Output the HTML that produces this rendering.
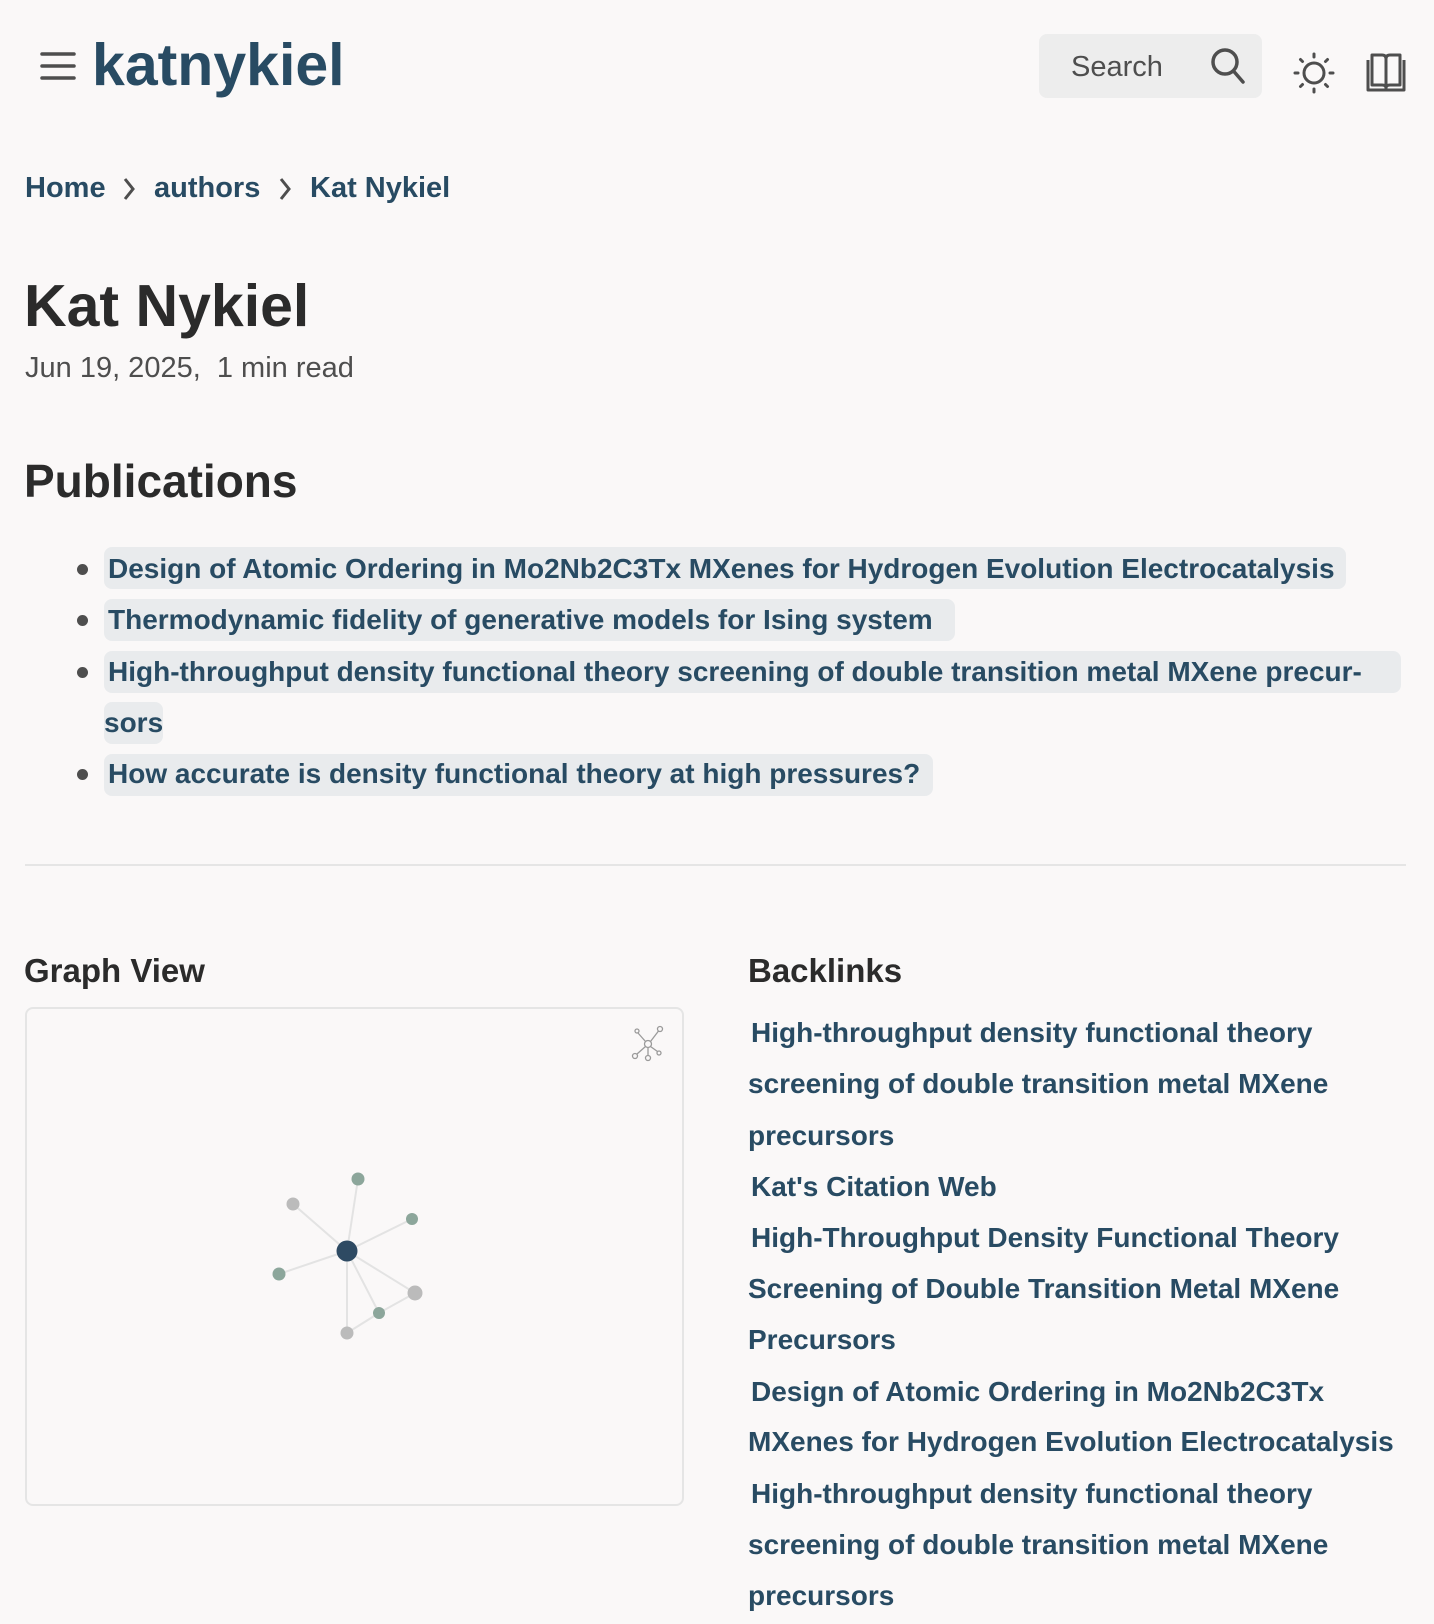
<!DOCTYPE html>
<html><head><meta charset="utf-8"><style>
*{margin:0;padding:0;box-sizing:border-box}
body{width:1434px;height:1624px;background:#faf8f8;font-family:"Liberation Sans",sans-serif;color:#2b2b2b;position:relative;overflow:hidden}
.a{position:absolute;white-space:nowrap}
.lk{color:#284b63;font-weight:bold}
.hl{position:absolute;background:#e9ebed;border-radius:8px;height:42px}
.pub{font-size:28px}
.bl{font-size:28px;color:#284b63;font-weight:bold}
.dot{position:absolute;width:11px;height:11px;border-radius:50%;background:#4e4e4e}
</style></head><body>
<svg class="a" style="left:40px;top:50px" width="36" height="32" viewBox="0 0 36 32"><g stroke="#4e4e4e" stroke-width="3.5" stroke-linecap="round"><line x1="2" y1="4" x2="34" y2="4"/><line x1="2" y1="16" x2="34" y2="16"/><line x1="2" y1="28" x2="34" y2="28"/></g></svg>
<div class="a" style="left:92px;top:30px;font-size:59px;font-weight:bold;color:#284b63;line-height:70px">katnykiel</div>
<div class="a" style="left:1039px;top:34px;width:223px;height:64px;background:#ededed;border-radius:8px"></div>
<div class="a" style="left:1071px;top:50px;font-size:29px;color:#4e4e4e;line-height:34px">Search</div>
<svg class="a" style="left:1208px;top:46px" width="40" height="40" viewBox="0 0 40 40"><circle cx="17" cy="16" r="12" fill="none" stroke="#4e4e4e" stroke-width="3.5"/><line x1="25.5" y1="25" x2="35" y2="36" stroke="#4e4e4e" stroke-width="3.5" stroke-linecap="round"/></svg>
<svg class="a" style="left:1293px;top:52px" width="42" height="42" viewBox="0 0 42 42"><g stroke="#4e4e4e" stroke-width="3" stroke-linecap="round" fill="none"><circle cx="21" cy="21" r="10"/><line x1="21" y1="2" x2="21" y2="5"/><line x1="21" y1="37" x2="21" y2="40"/><line x1="2" y1="21" x2="5" y2="21"/><line x1="37" y1="21" x2="40" y2="21"/><line x1="7.5" y1="7.5" x2="9.5" y2="9.5"/><line x1="32.5" y1="32.5" x2="34.5" y2="34.5"/><line x1="7.5" y1="34.5" x2="9.5" y2="32.5"/><line x1="32.5" y1="9.5" x2="34.5" y2="7.5"/></g></svg>
<svg class="a" style="left:1365px;top:52px" width="42" height="42" viewBox="0 0 42 42"><g stroke="#4e4e4e" stroke-width="3" fill="none" stroke-linejoin="round"><path d="M7 3 H17 Q21 3 21 7 V36 Q21 33 17 33 H7 Z"/><path d="M35 3 H25 Q21 3 21 7 V36 Q21 33 25 33 H35 Z"/><path d="M3 8 V38 H39 V8"/></g></svg>

<div class="a lk" style="left:25px;top:171px;font-size:29px;line-height:34px">Home</div>
<svg class="a" style="left:122px;top:177px" width="14" height="24"><path d="M3 2 L11 12 L3 22" stroke="#4e4e4e" stroke-width="3" fill="none"/></svg>
<div class="a lk" style="left:154px;top:171px;font-size:29px;line-height:34px">authors</div>
<svg class="a" style="left:278px;top:177px" width="14" height="24"><path d="M3 2 L11 12 L3 22" stroke="#4e4e4e" stroke-width="3" fill="none"/></svg>
<div class="a lk" style="left:310px;top:171px;font-size:29px;line-height:34px">Kat Nykiel</div>

<div class="a" style="left:24px;top:271px;font-size:59px;font-weight:bold;line-height:70px">Kat Nykiel</div>
<div class="a" style="left:25px;top:351px;font-size:29px;color:#4e4e4e;line-height:34px">Jun 19, 2025,&nbsp; 1 min read</div>

<div class="a" style="left:24px;top:454px;font-size:46px;font-weight:bold;line-height:54px">Publications</div>

<div class="dot" style="left:77px;top:564px"></div>
<div class="dot" style="left:77px;top:615px"></div>
<div class="dot" style="left:77px;top:667px"></div>
<div class="dot" style="left:77px;top:769px"></div>
<div class="hl" style="left:104px;top:547px;width:1242px"></div>
<div class="hl" style="left:104px;top:599px;width:851px"></div>
<div class="hl" style="left:104px;top:651px;width:1297px"></div>
<div class="hl" style="left:104px;top:702px;width:59px"></div>
<div class="hl" style="left:104px;top:754px;width:829px"></div>
<div class="a lk pub" style="left:108px;top:553px;line-height:32px">Design of Atomic Ordering in Mo2Nb2C3Tx MXenes for Hydrogen Evolution Electrocatalysis</div>
<div class="a lk pub" style="left:108px;top:604px;line-height:32px">Thermodynamic fidelity of generative models for Ising system</div>
<div class="a lk pub" style="left:108px;top:656px;line-height:32px">High-throughput density functional theory screening of double transition metal MXene precur-</div>
<div class="a lk pub" style="left:104px;top:707px;line-height:32px">sors</div>
<div class="a lk pub" style="left:108px;top:758px;line-height:32px">How accurate is density functional theory at high pressures?</div>

<div class="a" style="left:25px;top:864px;width:1381px;height:2px;background:#e5e5e5"></div>

<div class="a" style="left:24px;top:952px;font-size:33px;font-weight:bold;line-height:38px">Graph View</div>
<div class="a" style="left:748px;top:952px;font-size:33px;font-weight:bold;line-height:38px">Backlinks</div>

<div class="a" style="left:25px;top:1007px;width:659px;height:499px;border:2px solid #e5e5e5;border-radius:8px"></div>
<svg class="a" style="left:628px;top:1024px" width="40" height="40" viewBox="0 0 40 40"><g stroke="#9a9a9a" stroke-width="1.3" fill="none"><circle cx="20" cy="20" r="3.5"/><circle cx="9" cy="7" r="2"/><circle cx="32" cy="5" r="2.5"/><circle cx="7" cy="32" r="2.5"/><circle cx="20" cy="34" r="2.5"/><circle cx="31" cy="29" r="2"/><line x1="10" y1="9" x2="17.5" y2="17.5"/><line x1="30.5" y1="7" x2="22.5" y2="17.5"/><line x1="9" y1="30" x2="17.5" y2="22.5"/><line x1="20" y1="23.5" x2="20" y2="31.5"/><line x1="22.5" y1="22.5" x2="29.5" y2="27.5"/></g></svg>
<svg class="a" style="left:0;top:0" width="700" height="1500"><g stroke="#e3e3e3" stroke-width="2"><line x1="347" y1="1251" x2="358" y2="1179"/><line x1="347" y1="1251" x2="293" y2="1204"/><line x1="347" y1="1251" x2="412" y2="1219"/><line x1="347" y1="1251" x2="279" y2="1274"/><line x1="347" y1="1251" x2="415" y2="1293"/><line x1="347" y1="1251" x2="379" y2="1313"/><line x1="347" y1="1251" x2="347" y2="1333"/><line x1="415" y1="1293" x2="379" y2="1313"/><line x1="379" y1="1313" x2="347" y2="1333"/></g>
<g><circle cx="358" cy="1179" r="6.5" fill="#8ca69b"/><circle cx="293" cy="1204" r="6.5" fill="#bbbbbb"/><circle cx="412" cy="1219" r="6" fill="#8ca69b"/><circle cx="279" cy="1274" r="6.5" fill="#8ca69b"/><circle cx="415" cy="1293" r="7.5" fill="#bbbbbb"/><circle cx="379" cy="1313" r="6" fill="#8ca69b"/><circle cx="347" cy="1333" r="6.5" fill="#bbbbbb"/><circle cx="347" cy="1251" r="10.5" fill="#2e4a63"/></g></svg>

<div class="a bl" style="left:751px;top:1017px;line-height:32px">High-throughput density functional theory</div>
<div class="a bl" style="left:748px;top:1068px;line-height:32px">screening of double transition metal MXene</div>
<div class="a bl" style="left:748px;top:1120px;line-height:32px">precursors</div>
<div class="a bl" style="left:751px;top:1171px;line-height:32px">Kat's Citation Web</div>
<div class="a bl" style="left:751px;top:1222px;line-height:32px">High-Throughput Density Functional Theory</div>
<div class="a bl" style="left:748px;top:1273px;line-height:32px">Screening of Double Transition Metal MXene</div>
<div class="a bl" style="left:748px;top:1324px;line-height:32px">Precursors</div>
<div class="a bl" style="left:751px;top:1376px;line-height:32px">Design of Atomic Ordering in Mo2Nb2C3Tx</div>
<div class="a bl" style="left:748px;top:1426px;line-height:32px">MXenes for Hydrogen Evolution Electrocatalysis</div>
<div class="a bl" style="left:751px;top:1478px;line-height:32px">High-throughput density functional theory</div>
<div class="a bl" style="left:748px;top:1529px;line-height:32px">screening of double transition metal MXene</div>
<div class="a bl" style="left:748px;top:1580px;line-height:32px">precursors</div>
</body></html>
